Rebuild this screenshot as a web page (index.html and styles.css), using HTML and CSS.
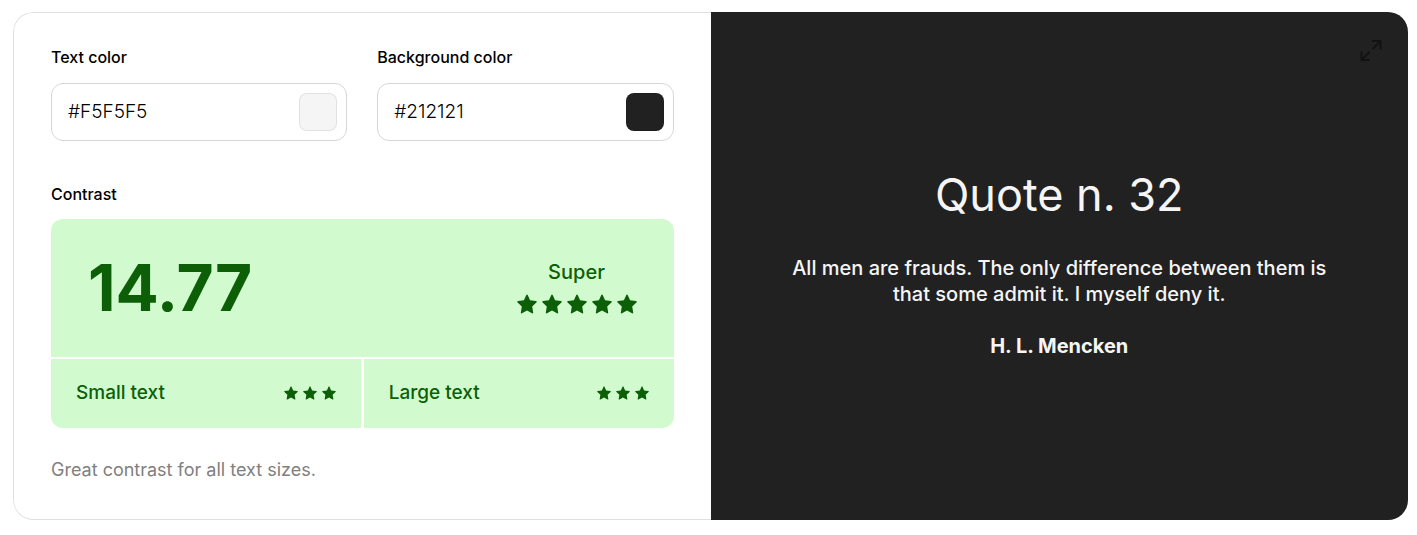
FILE: index.html
```html
<!DOCTYPE html>
<html lang="en">
<head>
<meta charset="utf-8">
<title>Color Contrast Checker</title>
<link rel="stylesheet" href="styles.css">
</head>
<body>
<svg class="sprite" aria-hidden="true">
  <symbol id="star" viewBox="0 0 20 20"><path d="M9.3 1.1q.7-1.3 1.4 0l2.4 5.2 5.8.8q1.5.3.5 1.4l-4.2 4.1 1 5.800q.1 1.400-1.200.8L10 16.500l-5 2.700q-1.300.6-1.200-.8l1-5.800L.6 8.500q-1-1.100.5-1.400l5.800-.8z"/></symbol>
</svg>
<main class="card">
  <section class="settings">
    <div class="fields">
      <div class="field">
        <label class="label" for="text-color">Text color</label>
        <div class="control">
          <input class="hex" id="text-color" type="text" value="#F5F5F5">
          <button class="swatch swatch-text" type="button" aria-label="Pick text color"></button>
        </div>
      </div>
      <div class="field">
        <label class="label" for="background-color">Background color</label>
        <div class="control">
          <input class="hex" id="background-color" type="text" value="#212121">
          <button class="swatch swatch-background" type="button" aria-label="Pick background color"></button>
        </div>
      </div>
    </div>
    <h2 class="label label-result">Contrast</h2>
    <div class="result">
      <div class="overall">
        <strong class="ratio">14.77</strong>
        <div class="rating">
          <span class="grade">Super</span>
          <span class="stars">
            <svg><use href="#star"/></svg><svg><use href="#star"/></svg><svg><use href="#star"/></svg><svg><use href="#star"/></svg><svg><use href="#star"/></svg>
          </span>
        </div>
      </div>
      <div class="sizes">
        <div class="size">
          <span>Small text</span>
          <span class="stars stars-small">
            <svg><use href="#star"/></svg><svg><use href="#star"/></svg><svg><use href="#star"/></svg>
          </span>
        </div>
        <div class="size">
          <span>Large text</span>
          <span class="stars stars-small">
            <svg><use href="#star"/></svg><svg><use href="#star"/></svg><svg><use href="#star"/></svg>
          </span>
        </div>
      </div>
    </div>
    <p class="summary">Great contrast for all text sizes.</p>
  </section>
  <section class="preview">
    <button class="expand" type="button" aria-label="Expand preview">
      <svg viewBox="0 0 24 24"><path d="M13.500 11l7.500-7.500M13 3h8.500v8.500M10.500 14L3 21.500M2.500 13.500V22H11"/></svg>
    </button>
    <h1 class="title">Quote n. 32</h1>
    <p class="quote">All men are frauds. The only difference between them is that some admit it. I myself deny it.</p>
    <p class="author">H. L. Mencken</p>
  </section>
</main>
</body>
</html>
```
FILE: styles.css
```css
* {
  box-sizing: border-box;
}

body {
  margin: 0;
  padding: 12px 9px 15px 13px;
  background: #fff;
  color: #000;
  font-family: Inter, "Liberation Sans", sans-serif;
}

h1, h2, p {
  margin: 0;
}

button {
  padding: 0;
  cursor: pointer;
}

.sprite {
  display: none;
}

.card {
  display: grid;
  grid-template-columns: repeat(2, minmax(0, 1fr));
  border-radius: 20px;
  overflow: hidden;
}

.settings {
  padding: 34px 37px 37px;
  border: 1px solid #e0e0e0;
  border-right: 0;
  border-radius: 20px 0 0 20px;
}

.fields {
  display: grid;
  grid-template-columns: repeat(2, minmax(0, 1fr));
  gap: 30px;
  margin-bottom: 43px;
}

.label {
  display: block;
  margin-bottom: 15px;
  font-size: 16px;
  font-weight: 500;
  line-height: 21px;
}

.label-result {
  margin-bottom: 14px;
}

.control {
  display: flex;
  align-items: center;
  height: 58px;
  padding: 0 9px 0 16px;
  border: 1px solid #d6d6d6;
  border-radius: 12px;
}

.hex {
  flex: 1;
  min-width: 0;
  padding: 0;
  border: 0;
  outline: 0;
  background: none;
  color: #000;
  font: 300 19px/24px Inter, "Liberation Sans", sans-serif;
}

.swatch {
  width: 38px;
  height: 38px;
  border: 1px solid rgba(0, 0, 0, 0.08);
  border-radius: 8px;
}

.swatch-text {
  background: #f5f5f5;
}

.swatch-background {
  background: #212121;
}

.result {
  display: grid;
  gap: 2px;
  border-radius: 12px;
  overflow: hidden;
  color: #0d5f07;
  font-weight: 500;
}

.overall {
  display: flex;
  align-items: center;
  justify-content: space-between;
  height: 138px;
  padding: 0 37px;
  background: #d1fbcf;
}

.ratio {
  font-size: 64px;
  font-weight: 700;
  line-height: 76px;
}

.rating {
  display: flex;
  flex-direction: column;
  align-items: center;
  gap: 10px;
  padding-bottom: 2px;
}

.grade {
  font-size: 20px;
  line-height: 24px;
}

.stars {
  display: flex;
  gap: 5px;
}

.stars svg {
  width: 20px;
  height: 20px;
  fill: currentColor;
}

.stars-small svg {
  width: 14px;
  height: 14px;
}

.sizes {
  display: grid;
  grid-template-columns: 1fr 1fr;
  gap: 3px;
}

.size {
  display: flex;
  align-items: center;
  justify-content: space-between;
  height: 69px;
  padding: 0 25px 2px;
  background: #d1fbcf;
  font-size: 19px;
  line-height: 24px;
}

.summary {
  margin-top: 30px;
  color: #808080;
  font-size: 18px;
  line-height: 24px;
}

.preview {
  position: relative;
  display: flex;
  flex-direction: column;
  align-items: center;
  justify-content: center;
  padding: 32px 80px 40px;
  background: #212121;
  color: #f5f5f5;
  text-align: center;
}

.expand {
  position: absolute;
  top: 26px;
  right: 25px;
  width: 24px;
  height: 24px;
  border: 0;
  background: none;
}

.expand svg {
  display: block;
  fill: none;
  stroke: #121212;
  stroke-width: 2;
}

.title {
  margin-bottom: 30px;
  font-size: 45px;
  font-weight: 400;
  line-height: 60px;
}

.quote {
  margin-bottom: 26px;
  font-size: 20px;
  font-weight: 500;
  line-height: 26px;
}

.author {
  font-size: 20px;
  font-weight: 700;
  line-height: 26px;
}
```
